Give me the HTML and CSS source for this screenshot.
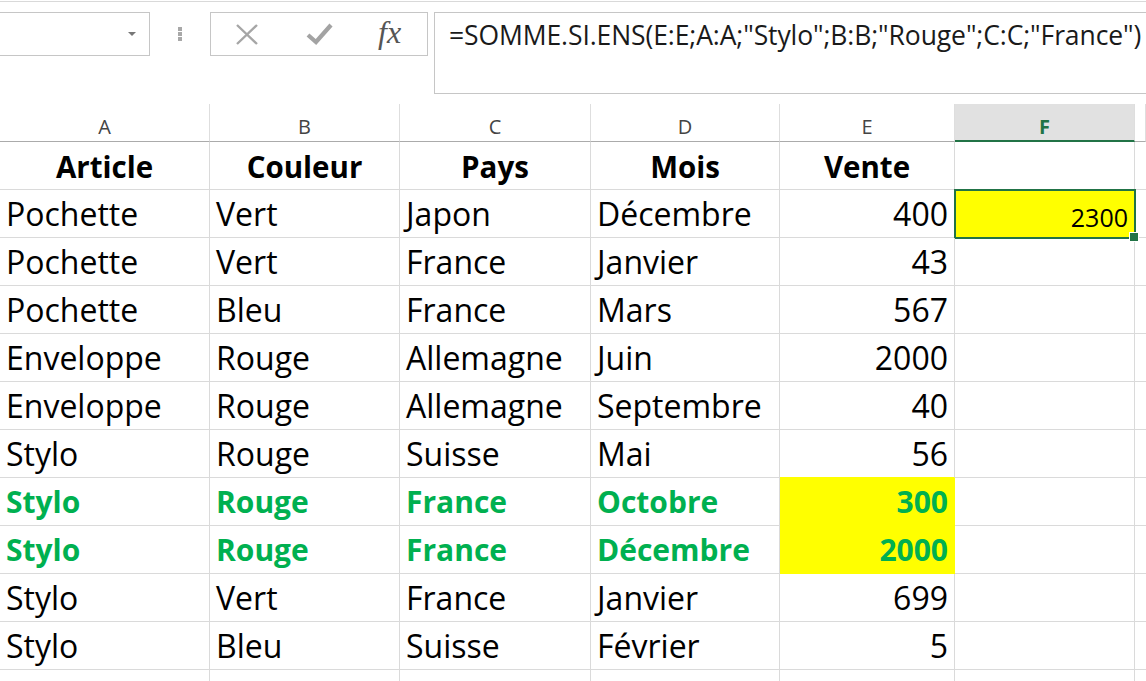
FILE: index.html
```html
<!DOCTYPE html>
<html lang="fr">
<head>
<meta charset="utf-8">
<title>Excel</title>
<link rel="stylesheet" href="styles.css">
</head>
<body>
<div class="toolbar">
  <div class="namebox"><span class="caret"></span></div>
  <div class="grip"><i></i><i></i><i></i></div>
  <div class="buttons">
    <svg class="ico-x" width="24" height="22" viewBox="0 0 24 22"><path d="M2 1 L22 20 M22 1 L2 20" stroke="#a6a6a6" stroke-width="2.4" fill="none"/></svg>
    <svg class="ico-ok" width="28" height="22" viewBox="0 0 28 22"><path d="M2 12 L10 19 L25 2" stroke="#a3a3a3" stroke-width="4.2" fill="none" stroke-linejoin="miter"/></svg>
    <span class="fx">fx</span>
  </div>
  <div class="formula">=SOMME.SI.ENS(E:E;A:A;"Stylo";B:B;"Rouge";C:C;"France")</div>
</div>
<div class="sheet">
  <div class="ch">A</div><div class="ch">B</div><div class="ch">C</div><div class="ch">D</div><div class="ch">E</div><div class="ch sel">F</div><div class="ch"></div>

  <div class="c b ctr">Article</div><div class="c b ctr">Couleur</div><div class="c b ctr">Pays</div><div class="c b ctr">Mois</div><div class="c b ctr">Vente</div><div class="c"></div><div class="c"></div>

  <div class="c">Pochette</div><div class="c">Vert</div><div class="c">Japon</div><div class="c">Décembre</div><div class="c r">400</div><div class="c r active"><span class="small">2300</span></div><div class="c"></div>

  <div class="c">Pochette</div><div class="c">Vert</div><div class="c">France</div><div class="c">Janvier</div><div class="c r">43</div><div class="c"></div><div class="c"></div>

  <div class="c">Pochette</div><div class="c">Bleu</div><div class="c">France</div><div class="c">Mars</div><div class="c r">567</div><div class="c"></div><div class="c"></div>

  <div class="c">Enveloppe</div><div class="c">Rouge</div><div class="c">Allemagne</div><div class="c">Juin</div><div class="c r">2000</div><div class="c"></div><div class="c"></div>

  <div class="c">Enveloppe</div><div class="c">Rouge</div><div class="c">Allemagne</div><div class="c">Septembre</div><div class="c r">40</div><div class="c"></div><div class="c"></div>

  <div class="c">Stylo</div><div class="c">Rouge</div><div class="c">Suisse</div><div class="c">Mai</div><div class="c r pre">56</div><div class="c"></div><div class="c"></div>

  <div class="c g">Stylo</div><div class="c g">Rouge</div><div class="c g">France</div><div class="c g">Octobre</div><div class="c r g hl">300</div><div class="c"></div><div class="c"></div>

  <div class="c g">Stylo</div><div class="c g">Rouge</div><div class="c g">France</div><div class="c g">Décembre</div><div class="c r g hl">2000</div><div class="c"></div><div class="c"></div>

  <div class="c">Stylo</div><div class="c">Vert</div><div class="c">France</div><div class="c">Janvier</div><div class="c r">699</div><div class="c"></div><div class="c"></div>

  <div class="c">Stylo</div><div class="c">Bleu</div><div class="c">Suisse</div><div class="c">Février</div><div class="c r">5</div><div class="c"></div><div class="c"></div>

  <div class="c"></div><div class="c"></div><div class="c"></div><div class="c"></div><div class="c"></div><div class="c"></div><div class="c"></div>
</div>
</body>
</html>
```

FILE: styles.css
```css
* { box-sizing: border-box; }
html, body { margin: 0; padding: 0; background: #fff; overflow: hidden; }
body { width: 1146px; height: 681px; font-family: "Open Sans", "Lato", sans-serif; }

.toolbar {
  margin-top: 1px;
  border-top: 1px solid #d9d9d9;
  height: 103px;
  padding-top: 10px;
  display: flex;
  align-items: flex-start;
}
.namebox {
  width: 150px;
  height: 44px;
  border: 1px solid #c6c6c6;
  border-left: none;
  position: relative;
  flex: none;
}
.caret {
  position: absolute;
  left: 128px;
  top: 19px;
  width: 0; height: 0;
  border-left: 4px solid transparent;
  border-right: 4px solid transparent;
  border-top: 4px solid #777;
}
.grip {
  width: 60px;
  height: 44px;
  display: flex;
  flex-direction: column;
  align-items: center;
  justify-content: center;
  gap: 1px;
  flex: none;
}
.grip i { display: block; width: 4px; height: 4px; background: #a8a8a8; }
.buttons {
  width: 218px;
  height: 44px;
  border: 1px solid #c6c6c6;
  display: flex;
  align-items: center;
  flex: none;
  position: relative;
}
.ico-x { margin-left: 24px; margin-top: 1px; }
.ico-ok { margin-left: 47px; margin-top: 0; }
.fx {
  margin-left: 44px;
  font-family: "Liberation Serif", "DejaVu Serif", serif;
  font-style: italic;
  font-size: 32px;
  color: #555;
  margin-top: -4px;
}
.formula {
  margin-left: 6px;
  flex: 1;
  height: 82px;
  border: 1px solid #c6c6c6;
  border-right: none;
  padding: 6px 0 0 14px;
  font-family: "Open Sans", "Lato", sans-serif;
  font-size: 26.5px;
  line-height: 32px;
  letter-spacing: -0.1px;
  color: #1a1a1a;
  white-space: nowrap;
  overflow: hidden;
}

.sheet {
  display: grid;
  grid-template-columns: 210px 190px 191px 189px 175px 180px 11px;
  grid-template-rows: 38px repeat(12, 48px);
}
.ch {
  border-right: 1px solid #dedede;
  border-bottom: 1px solid #ababab;
  font-size: 20px;
  color: #444;
  display: flex;
  align-items: center;
  justify-content: center;
  padding-top: 7px;
}
.ch.sel {
  background: #e1e1e1;
  color: #217346;
  font-weight: 700;
  border-bottom: 2px solid #217346;
  padding-top: 8px;
}
.c {
  border-right: 1px solid #dadada;
  border-bottom: 1px solid #dadada;
  font-size: 32px;
  line-height: 36px;
  color: #000;
  display: flex;
  align-items: flex-end;
  padding: 0 6px 5px 6px;
  white-space: nowrap;
  overflow: visible;
  position: relative;
}
.c.b { font-weight: 700; font-size: 29.5px; padding-bottom: 4px; }
.c.ctr { justify-content: center; }
.c.r { justify-content: flex-end; }
.c.g { color: #00b050; font-weight: 700; font-size: 30px; }
.c.hl { background: #ffff00; border-color: #ffff00; }
.c.pre { border-bottom-color: #ffff00; }
.small { font-size: 25px; line-height: 30px; margin-bottom: 0; }
.active { background: #ffff00; }
.active::after {
  content: "";
  position: absolute;
  left: -1px; top: -1px; right: -2px; bottom: -2px;
  border: 2px solid #217346;
  pointer-events: none;
}
.active::before {
  content: "";
  position: absolute;
  right: -5px;
  bottom: -5px;
  width: 8px;
  height: 8px;
  background: #217346;
  border: 1px solid #fff;
  z-index: 2;
}
```
